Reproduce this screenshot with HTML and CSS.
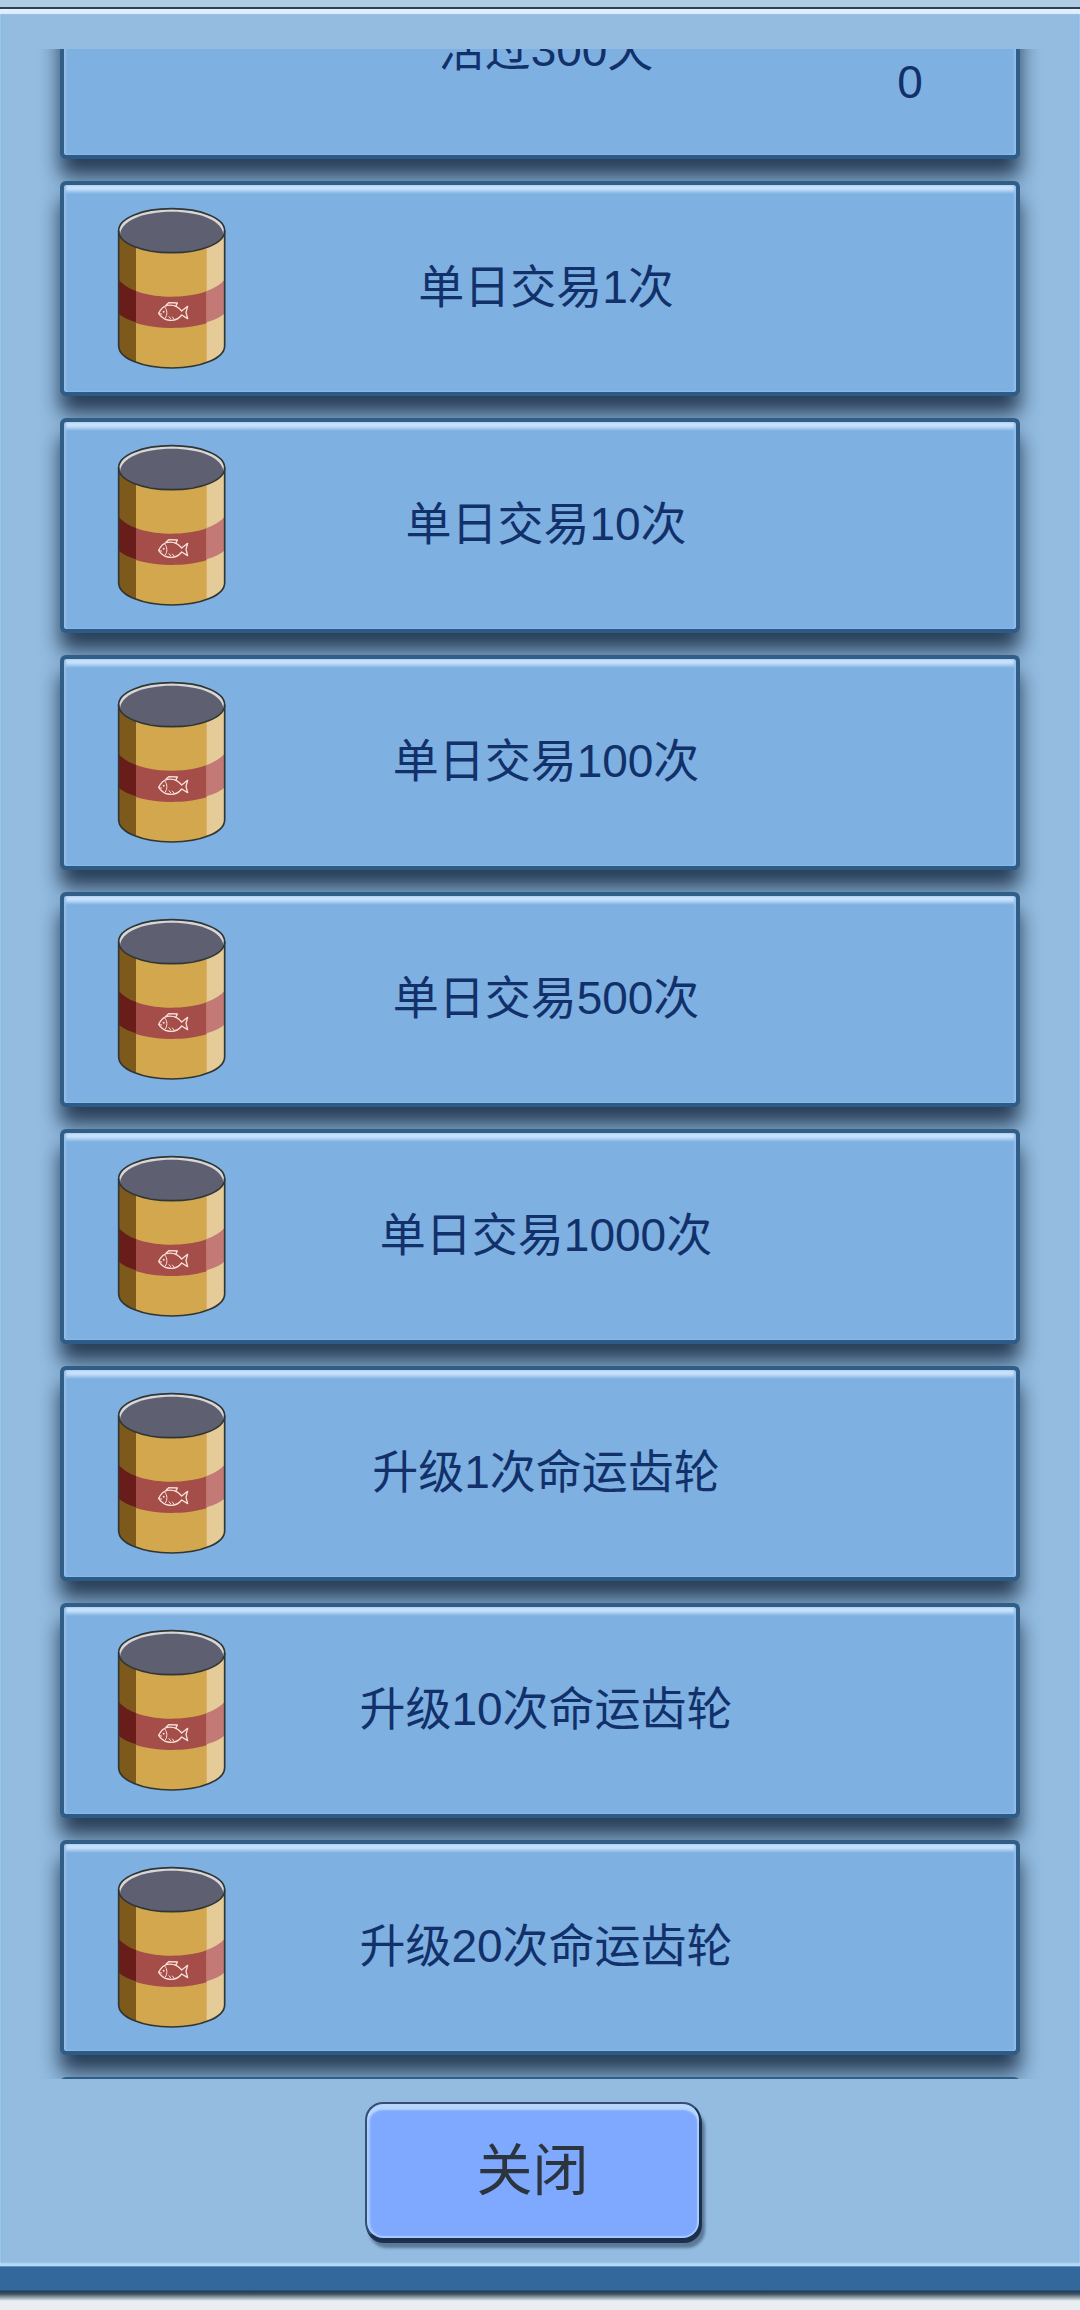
FILE: index.html
```
<!DOCTYPE html>
<html lang="zh-CN">
<head>
<meta charset="utf-8">
<meta name="viewport" content="width=device-width, initial-scale=1">
<title>成就</title>
<link rel="stylesheet" href="styles.css">
</head>
<body>
<svg class="sprite" aria-hidden="true">
  <defs>
    <clipPath id="can-body">
      <path d="M57 122C57 84 128 56 216 56S375 84 375 122V467C375 505 304 534 216 534S57 505 57 467Z"/>
    </clipPath>
    <symbol id="can" viewBox="52 51 327 489">
      <g clip-path="url(#can-body)">
        <path fill="#d3a74e" d="M52 51h327v489H52z"/>
        <path fill="#a44d49" d="M52 264C82 302 145 320 216 320S350 302 379 264V367C350 398 287 414 216 414S82 398 52 367Z"/>
        <path fill="#7d591b" d="M52 51h57v489H52z"/>
        <path fill="#681d1b" d="M52 264C67 283 86 295 109 303V397C86 390 66 381 52 367Z"/>
        <path fill="#e4cb98" d="M321 51h58v489h-58z"/>
        <path fill="#c37976" d="M321 303C346 294 366 282 379 264V367C366 380 345 390 321 397Z"/>
      </g>
      <ellipse cx="216" cy="122" rx="159" ry="66" fill="#d8d6d8"/>
      <path fill="#5e6072" d="M61 134C63 92 132 65 216 65S369 92 371 134C359 164 295 187 216 187S74 165 61 134Z"/>
      <g fill="none" stroke="#303633" stroke-width="5">
        <path d="M57 122C57 84 128 56 216 56S375 84 375 122V467C375 505 304 534 216 534S57 505 57 467Z"/>
        <path d="M57 122C57 160 128 188 216 188S375 160 375 122"/>
      </g>
      <g fill="none" stroke="#f8e2da" stroke-width="4" stroke-linecap="round" stroke-linejoin="round">
        <path d="M177 370C184 356 192 348 203 346C222 343 236 350 246 363L264 349L259 367L264 386L246 375C237 387 222 393 205 390C193 388 184 381 177 370Z"/>
        <path d="M199 346L207 338L233 339L228 349"/>
        <path stroke-width="3" d="M196 352C203 361 204 373 197 384M178 371L186 372M208 380L213 386M218 381L223 387"/>
      </g>
      <circle cx="192" cy="365" r="3" fill="#f8e2da"/>
    </symbol>
  </defs>
</svg>
<main class="panel">
  <ul class="list">
    <li class="card"><span class="title">活过300天</span><span class="value">0</span></li>
    <li class="card"><svg class="can"><use href="#can"/></svg><span class="title">单日交易1次</span></li>
    <li class="card"><svg class="can"><use href="#can"/></svg><span class="title">单日交易10次</span></li>
    <li class="card"><svg class="can"><use href="#can"/></svg><span class="title">单日交易100次</span></li>
    <li class="card"><svg class="can"><use href="#can"/></svg><span class="title">单日交易500次</span></li>
    <li class="card"><svg class="can"><use href="#can"/></svg><span class="title">单日交易1000次</span></li>
    <li class="card"><svg class="can"><use href="#can"/></svg><span class="title">升级1次命运齿轮</span></li>
    <li class="card"><svg class="can"><use href="#can"/></svg><span class="title">升级10次命运齿轮</span></li>
    <li class="card"><svg class="can"><use href="#can"/></svg><span class="title">升级20次命运齿轮</span></li>
    <li class="card" aria-hidden="true"></li>
  </ul>
  <footer class="footer">
    <button class="close" type="button">关闭</button>
  </footer>
</main>
<div class="base"></div>
</body>
</html>
```
FILE: styles.css
```
* {
  box-sizing: border-box;
}

body {
  display: flex;
  flex-direction: column;
  height: 100vh;
  margin: 0;
  padding-top: 7px;
  overflow: hidden;
  background: #b0cce2;
  font-family: "Liberation Sans", "Noto Sans CJK SC", sans-serif;
}

.sprite {
  position: absolute;
  width: 0;
  height: 0;
}

.panel {
  display: flex;
  flex: 1;
  flex-direction: column;
  min-height: 0;
  padding-top: 40px;
  border-top: 2px solid #2c4258;
  border-bottom: 1px solid #628fb8;
  background: #93bce0;
  box-shadow: inset 0 5px 1px #e0effb, inset 0 -3px 2px #b7dbfb, inset 2px 0 2px #8ab8e0, inset -2px 0 2px #8ab8e0;
}

.list {
  display: flex;
  flex: 1;
  flex-direction: column;
  gap: 22px;
  min-height: 0;
  margin: 0;
  padding: 0 60px;
  overflow: hidden;
  list-style: none;
}

/* The list rests part-way through its scroll range. */
.card:first-child {
  margin-top: -105px;
}

.card {
  display: grid;
  flex: none;
  grid-template-columns: 214px 1fr 202px;
  align-items: center;
  justify-items: center;
  height: 215px;
  border: 4px solid #315e87;
  border-bottom-color: #2d5b87;
  border-radius: 6px;
  background: linear-gradient(#cbe3fb, #c5e0fb 4px, #7eb0e1 9px) padding-box, #315e87;
  box-shadow: inset 2px 0 2px #97c0eb, inset -2px 0 2px #97c0eb, 0 18px 20px rgba(5, 20, 42, 0.75);
  color: #12306a;
  font-size: 46px;
  line-height: 62px;
}

.can {
  width: 109px;
  height: 163px;
}

.title {
  grid-column: 2;
  padding-bottom: 3px;
  white-space: nowrap;
}

.value {
  padding: 61px 10px 0 0;
}

.footer {
  display: flex;
  justify-content: center;
  padding: 23px 15px 26px 0;
}

.close {
  width: 336px;
  height: 138px;
  padding: 0;
  border: 2px solid #344f76;
  border-bottom-color: #1b304c;
  border-right-color: #1b304c;
  border-radius: 18px;
  background: #7fa9ff;
  box-shadow: inset 0 6px 2px #b7d7ff, inset 3px 0 2px #a9caff, inset -2px 0 1px #a9caff, inset 0 -2px 1px #a9caff, 1px 3px 0 #1b304c, 4px 8px 3px #5b7897;
  color: #2c353d;
  font-family: inherit;
  font-size: 56px;
  line-height: 76px;
}

.base {
  flex: none;
  height: 43px;
  background: linear-gradient(#32689c, #32689c 23px, #203c54 24px, #3e5364 27px, #e8eef2 34px);
}
```
